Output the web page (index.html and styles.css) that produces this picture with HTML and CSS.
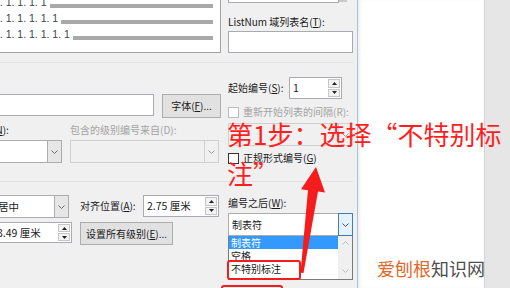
FILE: index.html
```html
<!DOCTYPE html>
<html lang="zh-CN">
<head>
<meta charset="utf-8">
<title>定义新多级列表</title>
<link rel="stylesheet" href="styles.css">
</head>
<body>
<div class="screen">
  <div class="dialog">
    <section class="sec sec1">
      <div class="left">
        <div class="preview">
          <div class="pv-row"><span class="pv-num">1. 1. 1. 1. 1</span><span class="pv-bar"></span></div>
          <div class="pv-row"><span class="pv-num">1. 1. 1. 1. 1. 1</span><span class="pv-bar"></span></div>
          <div class="pv-row"><span class="pv-num">1. 1. 1. 1. 1. 1. 1</span><span class="pv-bar"></span></div>
        </div>
      </div>
      <div class="right">
        <div class="listtail"><span class="listtail-box"></span><span class="listtail-thumb"></span></div>
        <div class="lbl lbl-listnum">ListNum 域列表名(<u>T</u>):</div>
        <div class="textbox tb-listnum"></div>
      </div>
    </section>

    <section class="sec sec2">
      <div class="left">
        <div class="inrow">
          <div class="textbox tb-format"></div>
          <div class="btn btn-font">字体(<u>F</u>)...</div>
        </div>
        <div class="pair">
          <div class="lbl">此级别的编号样式(<u>N</u>):</div>
          <div class="lbl dis">包含的级别编号来自(D):</div>
          <div class="combo">
            <span class="combo-val"></span>
            <span class="combo-btn"><svg width="7" height="4" viewBox="0 0 7 4"><polyline points="0.5,0.5 3.5,3.5 6.5,0.5" fill="none" stroke="#6d6d6d" stroke-width="1"/></svg></span>
          </div>
          <div class="combo combo-dis">
            <span class="combo-val"></span>
            <span class="combo-btn"><svg width="7" height="4" viewBox="0 0 7 4"><polyline points="0.5,0.5 3.5,3.5 6.5,0.5" fill="none" stroke="#9a9a9a" stroke-width="1"/></svg></span>
          </div>
        </div>
      </div>
      <div class="right">
        <div class="frow">
          <span class="lbl lbl-start">起始编号(<u>S</u>):</span>
          <div class="spin spin-start">
            <span class="spin-val">1</span>
            <span class="spin-btns">
              <span class="sb"><svg width="5" height="3" viewBox="0 0 5 3"><polygon points="2.5,0 5,3 0,3" fill="#222"/></svg></span>
              <span class="sb"><svg width="5" height="3" viewBox="0 0 5 3"><polygon points="0,0 5,0 2.5,3" fill="#222"/></svg></span>
            </span>
          </div>
        </div>
        <div class="chk-row dis"><span class="chk chk-dis"></span><span>重新开始列表的间隔(R):</span></div>
        <div class="combo combo-dis combo-restart">
          <span class="combo-val"></span>
          <span class="combo-btn"><svg width="7" height="4" viewBox="0 0 7 4"><polyline points="0.5,0.5 3.5,3.5 6.5,0.5" fill="none" stroke="#9a9a9a" stroke-width="1"/></svg></span>
        </div>
        <div class="chk-row chk-legal"><span class="chk"></span><span>正规形式编号(<u>G</u>)</span></div>
      </div>
    </section>

    <section class="sec sec3">
      <div class="left">
        <div class="posgrid">
          <div class="lbl">编号对齐方式(<u>U</u>):</div>
          <div class="combo combo-align">
            <span class="combo-val">居中</span>
            <span class="combo-btn"><svg width="7" height="4" viewBox="0 0 7 4"><polyline points="0.5,0.5 3.5,3.5 6.5,0.5" fill="none" stroke="#6d6d6d" stroke-width="1"/></svg></span>
          </div>
          <div class="alignat">
            <span class="lbl">对齐位置(<u>A</u>):</span>
            <div class="spin spin-at">
              <span class="spin-val">2.75 厘米</span>
              <span class="spin-btns">
                <span class="sb"><svg width="5" height="3" viewBox="0 0 5 3"><polygon points="2.5,0 5,3 0,3" fill="#222"/></svg></span>
                <span class="sb"><svg width="5" height="3" viewBox="0 0 5 3"><polygon points="0,0 5,0 2.5,3" fill="#222"/></svg></span>
              </span>
            </div>
          </div>
          <div class="lbl">文本缩进位置(<u>I</u>):</div>
          <div class="spin spin-indent">
            <span class="spin-val">3.49 厘米</span>
            <span class="spin-btns">
              <span class="sb"><svg width="5" height="3" viewBox="0 0 5 3"><polygon points="2.5,0 5,3 0,3" fill="#222"/></svg></span>
              <span class="sb"><svg width="5" height="3" viewBox="0 0 5 3"><polygon points="0,0 5,0 2.5,3" fill="#222"/></svg></span>
            </span>
          </div>
          <div class="btn btn-all">设置所有级别(<u>E</u>)...</div>
        </div>
      </div>
      <div class="right">
        <div class="lbl lbl-after">编号之后(<u>W</u>):</div>
        <div class="combo combo-after">
          <span class="combo-val">制表符</span>
          <span class="combo-btn combo-btn-hot"><svg width="7" height="4" viewBox="0 0 7 4"><polyline points="0.5,0.5 3.5,3.5 6.5,0.5" fill="none" stroke="#3a5a80" stroke-width="1"/></svg></span>
        </div>
        <div class="droplist">
          <div class="dl-items">
            <div class="dl-item sel">制表符</div>
            <div class="dl-item">空格</div>
            <div class="dl-item">不特别标注</div>
          </div>
          <div class="dl-scroll">
            <svg width="7" height="4" viewBox="0 0 7 4"><polyline points="0.5,3.5 3.5,0.5 6.5,3.5" fill="none" stroke="#bdbdbd" stroke-width="1"/></svg>
            <svg width="7" height="4" viewBox="0 0 7 4"><polyline points="0.5,0.5 3.5,3.5 6.5,0.5" fill="none" stroke="#bdbdbd" stroke-width="1"/></svg>
          </div>
        </div>
      </div>
    </section>
  </div>
  <div class="doc"></div>
  <div class="side"></div>

  <svg class="marks" width="510" height="288" viewBox="0 0 510 288">
    <rect x="228" y="261" width="72" height="18" rx="2" fill="none" stroke="#f41c1c" stroke-width="2"/>
    <rect x="222" y="286" width="60" height="12" rx="2" fill="none" stroke="#f41c1c" stroke-width="2"/>
    <polygon points="316,167 325,192.5 318,191.5 303.5,273 300.5,272.8 308,190.2 301,189.2" fill="#f41c1c"/>
  </svg>
  <div class="note">第1步：选择“不特别标<br>注”</div>
  <div class="wm"><span class="wm-a">爱刨根</span>知识网</div>
</div>
</body>
</html>
```

FILE: styles.css
```css
* { box-sizing: border-box; }
html, body { margin: 0; padding: 0; }
body {
  width: 510px;
  height: 288px;
  overflow: hidden;
  font-family: "Noto Sans CJK SC", "Noto Sans", sans-serif;
  font-size: 10px;
  color: #1a1a1a;
  background: #e6e6e6;
}
u { text-decoration: underline; text-underline-offset: 1px; }

.screen {
  position: relative;
  display: flex;
  width: 510px;
  height: 288px;
  overflow: hidden;
}
.dialog {
  flex: none;
  width: 357px;
  height: 288px;
  background: #f0f0f0;
  padding-right: 4px;
  overflow: hidden;
}
.doc {
  flex: none;
  width: 127px;
  height: 288px;
  background: #fff;
  border-left: 1px solid #a9c3df;
  box-shadow: inset 3px 0 3px -1px rgba(0,0,0,0.07);
}
.side {
  flex: 1;
  height: 288px;
  background: #e6e6e6;
  border-left: 1px solid #d3d3d3;
}

/* sections */
.sec {
  display: grid;
  grid-template-columns: 221px 125px;
  column-gap: 7px;
  border-bottom: 1px solid #e1e1e1;
  align-items: start;
}
.sec1 { height: 63px; }
.sec2 { height: 119px; }
.sec3 { border-bottom: 0; }
.left { margin-left: -88px; }
.right { min-width: 0; }

.lbl { line-height: 14px; white-space: nowrap; }
.dis { color: #a3a3a3; }

/* preview */
.preview {
  margin-left: 81px;
  height: 53px;
  background: #fff;
  border-right: 1px solid #a2a2a2;
  border-bottom: 1px solid #a2a2a2;
  overflow: hidden;
  padding-left: 1px;
}
.pv-row { display: flex; height: 16px; }
.pv-row:first-child { margin-top: -6px; }
.pv-num {
  font-family: "Liberation Sans", Arial, sans-serif;
  font-size: 10.5px;
  line-height: 16px;
  color: #3b4250;
  white-space: pre;
}
.pv-bar {
  flex: 1;
  height: 4px;
  margin-top: 10px;
  margin-left: 3px;
  margin-right: 7px;
  background: #a9a9a9;
}

/* right column of section 1 */
.listtail { display: flex; width: 119px; height: 3px; }
.listtail-box { flex: 1; background: #fff; border: 1px solid #a9abb2; border-top: 0; }
.listtail-thumb { width: 8px; height: 2px; background: #c9c9c9; }
.lbl-listnum { margin-top: 12px; }
.textbox { background: #fff; border: 1px solid #a9abb2; }
.tb-listnum { margin-top: 2px; height: 22px; }

/* section 2 left */
.inrow { display: flex; gap: 8px; margin-top: 31px; align-items: flex-start; }
.tb-format { flex: 1; height: 22px; }
.btn {
  background: #e1e1e1;
  border: 1px solid #adadad;
  text-align: center;
  white-space: nowrap;
  color: #1a1a1a;
}
.btn-font { width: 59px; height: 24px; line-height: 22px; }
.pair {
  display: grid;
  grid-template-columns: 150px 149px;
  column-gap: 8px;
  row-gap: 3px;
  margin-top: 5px;
}

/* combos */
.combo {
  display: flex;
  height: 23px;
  background: #fff;
  border: 1px solid #acacac;
}
.combo-val { flex: 1; padding-left: 3px; line-height: 21px; white-space: nowrap; overflow: hidden; }
.combo-btn {
  width: 14px;
  display: flex;
  align-items: center;
  justify-content: center;
  background: #e6e6e6;
  border-left: 1px solid #acacac;
}
.combo-dis { background: #f0f0f0; border-color: #cfcfcf; }
.combo-dis .combo-btn { background: #f0f0f0; border-left-color: #cfcfcf; }

/* spins */
.spin {
  display: flex;
  height: 22px;
  background: #fff;
  border: 1px solid #a9abb2;
}
.spin-val { flex: 1; padding-left: 3px; line-height: 20px; white-space: nowrap; font-size: 10.5px; }
.spin-btns { width: 13px; display: flex; flex-direction: column; padding: 1px 1px 1px 0; gap: 1px; }
.sb {
  flex: 1;
  display: flex;
  align-items: center;
  justify-content: center;
  background: #f3f3f3;
  border: 1px solid #c6c6c6;
}

/* section 2 right */
.frow { display: flex; align-items: center; margin-top: 14px; }
.lbl-start { width: 61px; }
.spin-start { width: 53px; }
.chk-row {
  display: flex;
  align-items: center;
  gap: 4px;
  height: 14px;
  line-height: 14px;
  white-space: nowrap;
  margin-top: 6px;
}
.chk { width: 11px; height: 11px; flex: none; background: #fff; border: 1px solid #333; }
.chk-dis { border-color: #bcbcbc; }
.combo-restart { margin-top: 4px; }
.chk-legal { margin-top: 5px; }

/* section 3 */
.posgrid {
  display: grid;
  grid-template-columns: 75px 77px 139px;
  column-gap: 8px;
  row-gap: 4px;
  margin-top: 13px;
  align-items: start;
}
.combo-align { margin-right: 3px; }
.combo-align .combo-val { padding-left: 2px; font-size: 10.5px; }
.alignat { display: flex; align-items: center; justify-content: space-between; height: 22px; }
.spin-at { width: 76px; }
.spin-indent { height: 21px; }
.spin-indent .spin-val { line-height: 19px; padding-left: 1px; }
.btn-all { width: 93px; height: 23px; line-height: 21px; }

.lbl-after { margin-top: 14px; }
.combo-after { margin-top: 3px; }
.combo-after .combo-btn { width: 15px; }
.combo-btn-hot { background: #e5f1fb; border: 1px solid #3c7fb1; margin: -1px -1px -1px 0; }
.droplist {
  display: flex;
  height: 44px;
  background: #fff;
  border: 1px solid #7a7a7a;
  border-top: 0;
}
.dl-items { flex: 1; }
.dl-item { height: 13px; line-height: 13px; padding-left: 2px; white-space: nowrap; }
.dl-item.sel { background: #3399ff; color: #fff; }
.dl-scroll {
  width: 14px;
  background: #f0f0f0;
  display: flex;
  flex-direction: column;
  align-items: center;
  justify-content: space-between;
  padding: 5px 0 6px;
}

/* overlays */
.marks { position: absolute; left: 0; top: 0; pointer-events: none; }
.note {
  position: absolute;
  left: 227px;
  top: 114px;
  font-family: "Noto Sans CJK SC", sans-serif;
  font-size: 26px;
  line-height: 39px;
  color: #ff1f1f;
  white-space: nowrap;
}
.wm {
  position: absolute;
  left: 377px;
  top: 256px;
  font-family: "Noto Sans CJK SC", sans-serif;
  font-size: 18px;
  line-height: 24px;
  color: #4d4d4d;
  white-space: nowrap;
}
.wm-a { color: #e0692a; }
```
